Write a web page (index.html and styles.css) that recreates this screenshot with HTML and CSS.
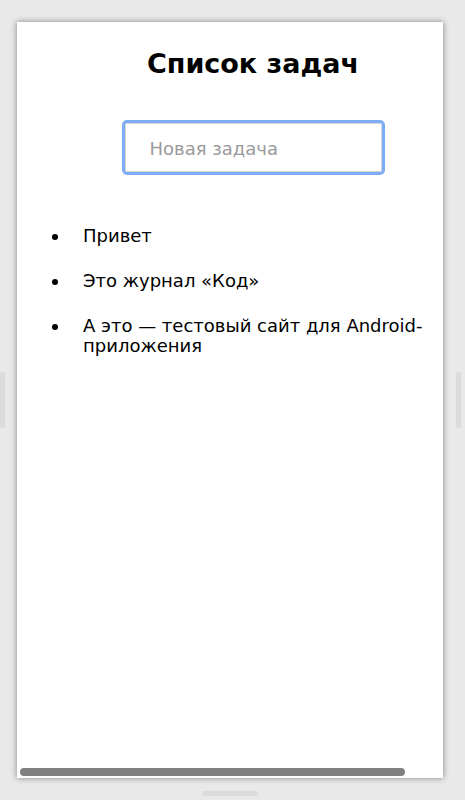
FILE: index.html
```html
<!DOCTYPE html>
<html>
<head>
    <title>Список задач</title>
    <link rel="stylesheet" href="styles.css">
</head>
<body>
    <div class="device">
        <div class="side-handle left"></div>
        <div class="screen">
            <div class="page">
                <h1>Список задач</h1>
                <div class="input-row">
                    <input type="text" id="newTask" placeholder="Новая задача">
                </div>
                <ul class="tasks">
                    <li>Привет</li>
                    <li>Это журнал «Код»</li>
                    <li>А это — тестовый сайт для Android-приложения</li>
                </ul>
            </div>
            <div class="scrollbar"></div>
        </div>
        <div class="side-handle right"></div>
        <div class="bottom-handle"></div>
    </div>
</body>
</html>
```

FILE: styles.css
```css
html, body {
    margin: 0;
    height: 100%;
}
body {
    background-color: #e9e9e9;
    font-family: "DejaVu Sans", Verdana, sans-serif;
}
.device {
    position: relative;
    height: 800px;
    padding: 22px 0 0 17px;
    box-sizing: border-box;
}
.screen {
    position: relative;
    width: 426px;
    height: 756px;
    background-color: white;
    overflow: hidden;
    box-shadow: 0 0 6px rgba(0,0,0,0.45);
}
.page {
    width: 472px;
}
h1 {
    margin: 0;
    padding-top: 26px;
    font-size: 27px;
    font-weight: bold;
    text-align: center;
    color: #000;
}
.input-row {
    display: flex;
    justify-content: center;
    margin-top: 44px;
}
#newTask {
    width: 257px;
    height: 49px;
    box-sizing: border-box;
    padding: 2px 24px 0;
    border: 1px solid #d8d8d8;
    border-radius: 2px;
    outline: 3px solid #7fadf5;
    font-family: "DejaVu Sans", Verdana, sans-serif;
    font-size: 18px;
}
#newTask::placeholder {
    color: #9a9a9a;
}
.tasks {
    list-style: none;
    margin: 54px 0 0;
    padding: 0 0 0 35px;
    font-size: 18px;
    line-height: 20px;
    color: #000;
}
.tasks li {
    display: flex;
    margin-bottom: 25px;
}
.tasks li::before {
    content: "";
    flex: none;
    width: 6px;
    height: 6px;
    margin: 8px 25px 0 0;
    border-radius: 50%;
    background-color: #000;
}
.scrollbar {
    position: absolute;
    left: 3px;
    bottom: 2px;
    width: 385px;
    height: 8px;
    border-radius: 4px;
    background-color: #808080;
}
.side-handle {
    position: absolute;
    top: 372px;
    width: 5px;
    height: 56px;
    border-radius: 3px;
    background-color: #dcdcdc;
}
.side-handle.left {
    left: 0;
}
.side-handle.right {
    left: 456px;
}
.bottom-handle {
    position: absolute;
    left: 202px;
    top: 791px;
    width: 56px;
    height: 5px;
    border-radius: 3px;
    background-color: #dcdcdc;
}
```
